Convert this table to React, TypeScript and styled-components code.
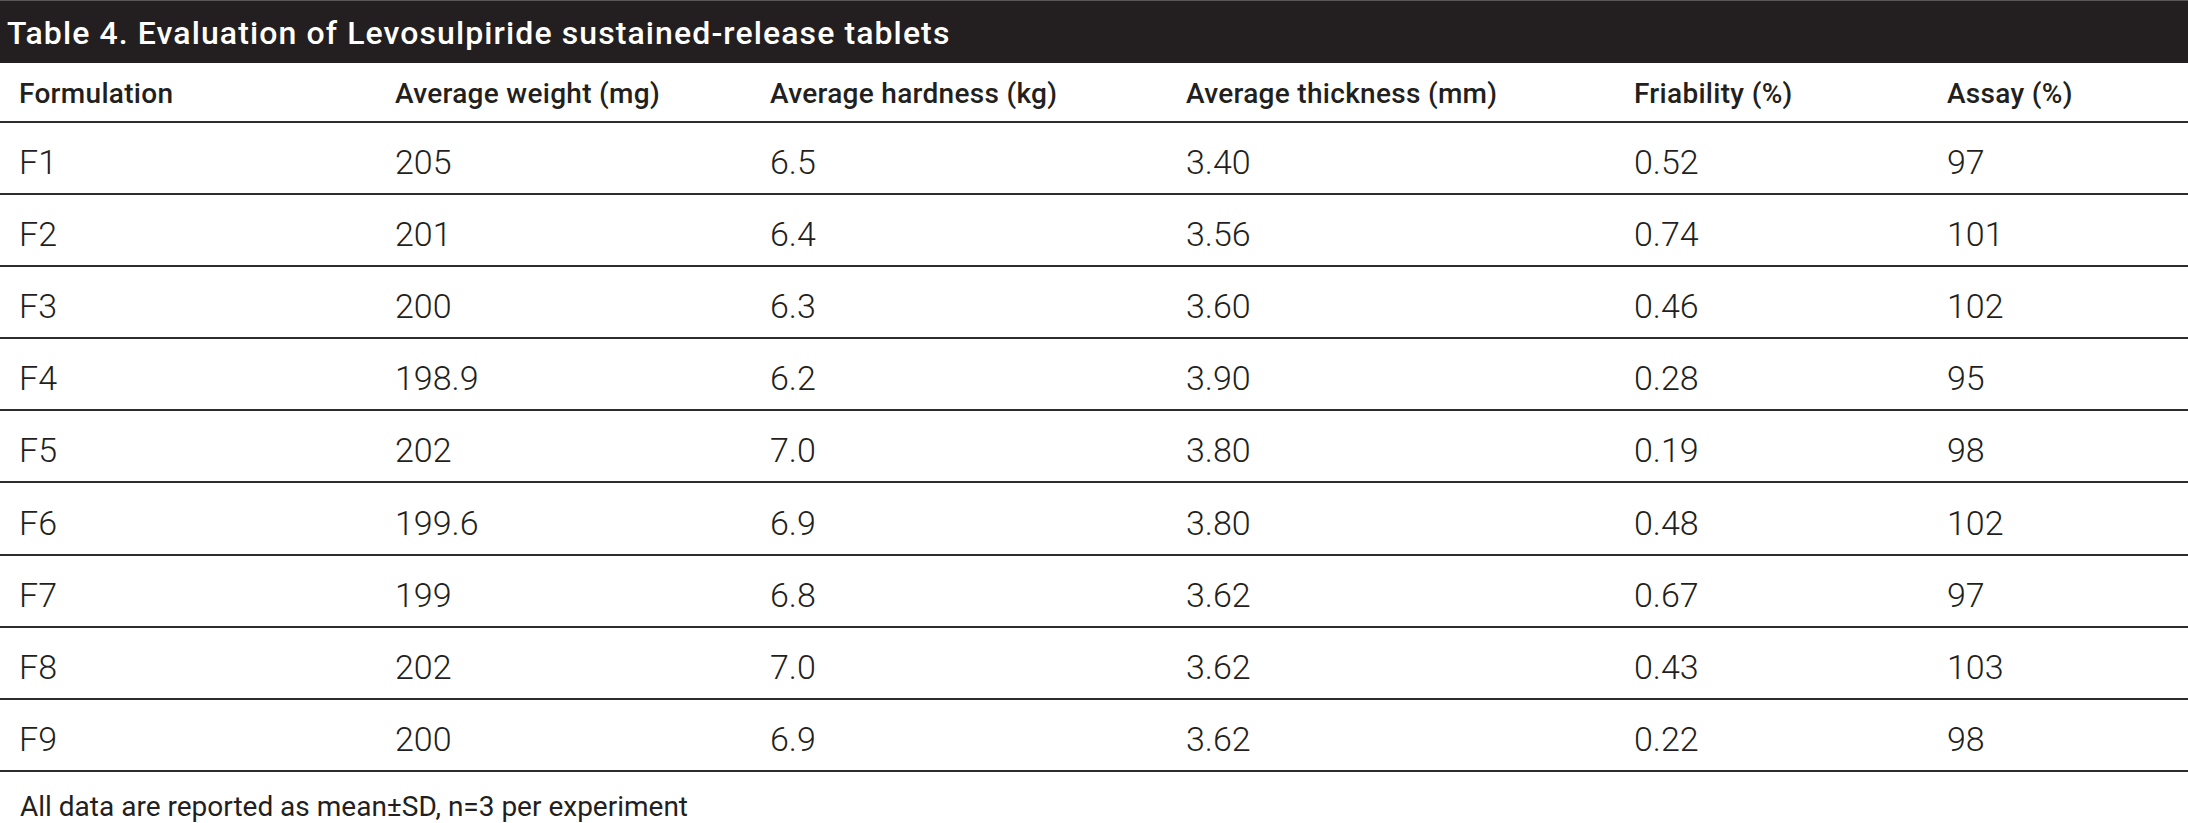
import React from "react";
import styled, { createGlobalStyle } from "styled-components";

// rows of the evaluation table, one per formulation
const rows = [
  ["F1", "205", "6.5", "3.40", "0.52", "97"],
  ["F2", "201", "6.4", "3.56", "0.74", "101"],
  ["F3", "200", "6.3", "3.60", "0.46", "102"],
  ["F4", "198.9", "6.2", "3.90", "0.28", "95"],
  ["F5", "202", "7.0", "3.80", "0.19", "98"],
  ["F6", "199.6", "6.9", "3.80", "0.48", "102"],
  ["F7", "199", "6.8", "3.62", "0.67", "97"],
  ["F8", "202", "7.0", "3.62", "0.43", "103"],
  ["F9", "200", "6.9", "3.62", "0.22", "98"],
];

const headers = [
  "Formulation",
  "Average weight (mg)",
  "Average hardness (kg)",
  "Average thickness (mm)",
  "Friability (%)",
  "Assay (%)",
];

const GlobalStyle = createGlobalStyle`
  html, body {
    margin: 0;
    padding: 0;
    background: #ffffff;
  }
  body {
    font-family: Roboto, "Liberation Sans", Arial, sans-serif;
    color: #231f20;
  }
`;

export default function App() {
  return (
    <>
      <GlobalStyle />
      <Page>
        <TitleBar>Table 4. Evaluation of Levosulpiride sustained-release tablets</TitleBar>
        <Row $head>
          {headers.map((h) => (
            <Cell key={h} $head>
              {h}
            </Cell>
          ))}
        </Row>
        {rows.map((r) => (
          <Row key={r[0]}>
            {r.map((v, idx) => (
              <Cell key={`${r[0]}-${idx}`}>{v}</Cell>
            ))}
          </Row>
        ))}
        <Footnote>All data are reported as mean±SD, n=3 per experiment</Footnote>
      </Page>
    </>
  );
}

const Page = styled.div`
  width: 2188px;
  height: 823px;
  overflow: hidden;
`;

const TitleBar = styled.div`
  box-sizing: border-box;
  height: 63px;
  padding: 16px 0 0 7px;
  background: #231f20;
  border-top: 1px solid #5a5758;
  color: #ffffff;
  font-size: 32px;
  font-weight: 500;
  line-height: 1;
  letter-spacing: 1.1px;
`;

const Row = styled.div<{ $head?: boolean }>`
  box-sizing: border-box;
  display: grid;
  grid-template-columns: 376px 375px 416px 448px 313px 1fr;
  align-items: end;
  padding-left: 19px;
  height: ${({ $head }) => ($head ? "60px" : "72.1px")};
  padding-bottom: ${({ $head }) => ($head ? "13px" : "14px")};
  border-bottom: 2px solid #2e2b2c;
`;

const Cell = styled.div<{ $head?: boolean }>`
  font-size: ${({ $head }) => ($head ? "28px" : "34px")};
  font-weight: ${({ $head }) => ($head ? 500 : 300)};
  letter-spacing: ${({ $head }) => ($head ? "0.3px" : "0")};
  line-height: 1;
  white-space: nowrap;
`;

const Footnote = styled.div`
  padding: 21px 0 0 20px;
  font-size: 28px;
  font-weight: 400;
  letter-spacing: 0;
  line-height: 1;
`;
